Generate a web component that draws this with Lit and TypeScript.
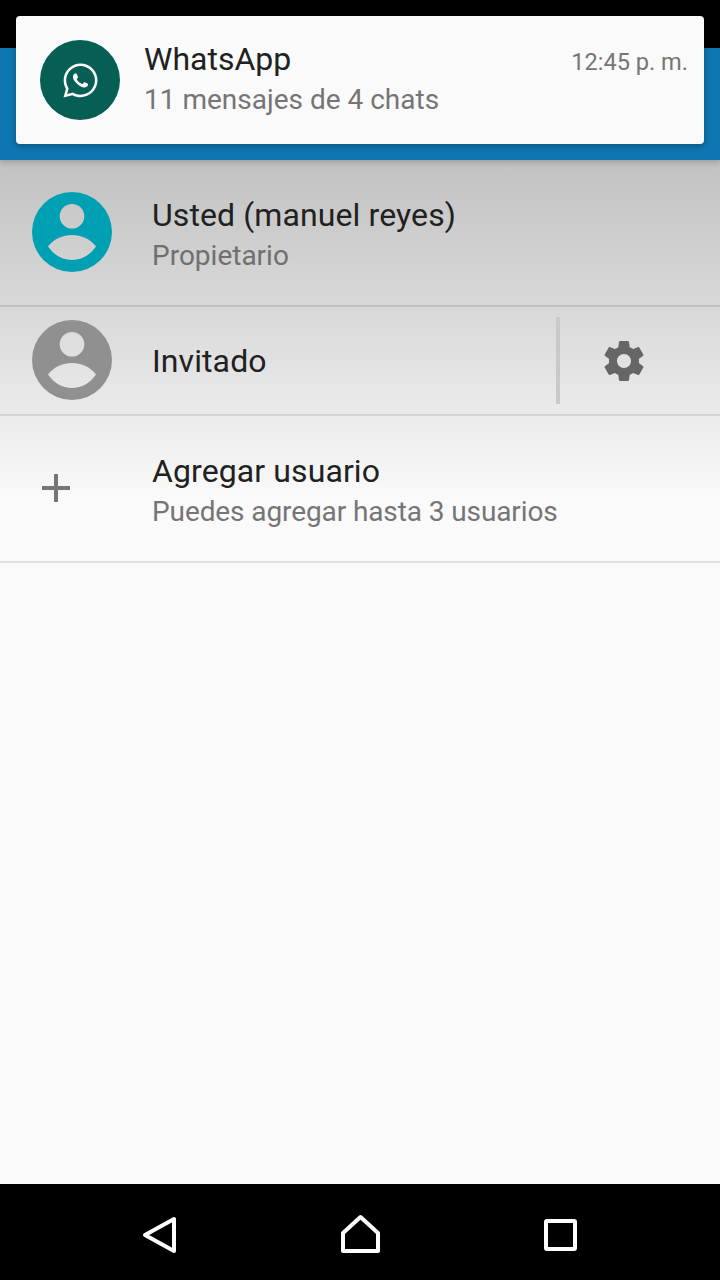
import { LitElement, html, css } from 'lit';
import { customElement, property } from 'lit/decorators.js';

const GEAR =
  'M19.43 12.98c.04-.32.07-.64.07-.98s-.03-.66-.07-.98l2.11-1.65c.19-.15.24-.42.12-.64l-2-3.46c-.12-.22-.39-.3-.61-.22l-2.49 1c-.52-.4-1.08-.73-1.69-.98l-.38-2.65C14.46 2.18 14.25 2 14 2h-4c-.25 0-.46.18-.49.42l-.38 2.65c-.61.25-1.17.59-1.69.98l-2.49-1c-.23-.09-.49 0-.61.22l-2 3.46c-.13.22-.07.49.12.64l2.11 1.65c-.04.32-.07.65-.07.98s.03.66.07.98l-2.11 1.65c-.19.15-.24.42-.12.64l2 3.46c.12.22.39.3.61.22l2.49-1c.52.4 1.08.73 1.69.98l.38 2.65c.03.24.24.42.49.42h4c.25 0 .46-.18.49-.42l.38-2.65c.61-.25 1.17-.59 1.69-.98l2.49 1c.23.09.49 0 .61-.22l2-3.46c.12-.22.07-.49-.12-.64l-2.11-1.65zM12 15.5c-1.93 0-3.5-1.57-3.5-3.5s1.57-3.5 3.5-3.5 3.5 1.57 3.5 3.5-1.57 3.5-3.5 3.5z';

const WA_BUBBLE =
  'M12.04 2C6.58 2 2.13 6.45 2.13 11.91C2.13 13.66 2.59 15.36 3.45 16.86L2.05 22L7.3 20.62C8.75 21.41 10.38 21.83 12.04 21.83C17.5 21.83 21.95 17.38 21.95 11.92C21.95 9.27 20.92 6.78 19.05 4.91C17.18 3.03 14.69 2 12.04 2M12.05 3.5C14.25 3.5 16.4 4.45 17.95 6C19.5 7.6 20.45 9.72 20.45 11.92C20.45 16.55 16.65 20.32 12.04 20.32C10.56 20.32 9.05 19.9 7.8 19.15L7.55 19L4.2 19.9L5.1 16.65L4.9 16.35C4.08 15 3.63 13.47 3.63 11.91C3.64 7.3 7.45 3.5 12.05 3.5Z';

const WA_HANDSET =
  'M8.53 7.33C8.37 7.33 8.1 7.39 7.87 7.64C7.65 7.89 7 8.5 7 9.71C7 10.93 7.89 12.1 8 12.27C8.14 12.44 9.76 14.94 12.25 16C12.84 16.27 13.3 16.42 13.66 16.53C14.25 16.72 14.79 16.69 15.22 16.63C15.7 16.56 16.68 16.03 16.89 15.45C17.1 14.87 17.1 14.38 17.04 14.27C16.97 14.17 16.81 14.11 16.56 14C16.31 13.86 15.09 13.26 14.87 13.18C14.64 13.1 14.5 13.06 14.31 13.3C14.15 13.55 13.67 14.11 13.53 14.27C13.38 14.44 13.24 14.46 13 14.34C12.74 14.21 11.94 13.95 11 13.11C10.26 12.45 9.77 11.64 9.62 11.39C9.5 11.15 9.61 11 9.73 10.89C9.84 10.78 10 10.6 10.1 10.45C10.23 10.31 10.27 10.2 10.35 10.04C10.43 9.87 10.39 9.73 10.33 9.61C10.27 9.5 9.77 8.26 9.56 7.77C9.36 7.29 9.16 7.35 9 7.34C8.86 7.34 8.7 7.33 8.53 7.33Z';

// disc with head and shoulders punched out, so the list gradient shows through
const AVATAR =
  'M40 0A40 40 0 1 0 40 80A40 40 0 1 0 40 0Z' +
  'M40 12A12.3 12.3 0 1 1 40 36.6A12.3 12.3 0 1 1 40 12Z' +
  'M16 54.5C22 47 30 43 40 43C50 43 58 47 64 54.5C58 63 50 68 40 68C30 68 22 63 16 54.5Z';

@customElement('user-avatar')
export class UserAvatar extends LitElement {
  @property() color = '#9e9e9e';

  static styles = css`
    :host {
      display: block;
      width: 80px;
      height: 80px;
    }
    svg {
      display: block;
    }
  `;

  render() {
    return html`
      <svg width="80" height="80" viewBox="0 0 80 80">
        <path fill=${this.color} fill-rule="evenodd" d=${AVATAR} />
      </svg>
    `;
  }
}

@customElement('app-root')
export class AppRoot extends LitElement {
  static styles = css`
    :host {
      display: flex;
      flex-direction: column;
      position: relative;
      width: 720px;
      height: 1280px;
      overflow: hidden;
      background: #fafafa;
      font-family: Roboto, 'Noto Sans', sans-serif;
      color: #212121;
    }
    .status {
      height: 48px;
      background: #000;
    }
    .toolbar {
      height: 112px;
      background: #0e76b1;
      box-shadow: 0 2px 6px rgba(0, 0, 0, 0.22);
      position: relative;
      z-index: 1;
    }
    .notification {
      position: absolute;
      z-index: 2;
      top: 16px;
      left: 16px;
      width: 688px;
      height: 128px;
      box-sizing: border-box;
      padding: 24px 16px 24px 24px;
      display: flex;
      gap: 24px;
      background: #fafafa;
      border-radius: 4px;
      box-shadow: 0 2px 6px rgba(0, 0, 0, 0.28);
    }
    .app-icon {
      width: 80px;
      height: 80px;
      flex: none;
      border-radius: 50%;
      background: #075e54;
      display: flex;
      align-items: center;
      justify-content: center;
    }
    .note-body {
      flex: 1;
      min-width: 0;
    }
    .note-head {
      display: flex;
      justify-content: space-between;
      align-items: baseline;
      margin: -1px 0 1px;
    }
    .note-title {
      font-size: 32px;
      line-height: 40px;
    }
    .note-time {
      font-size: 23.6px;
      color: #757575;
    }
    .note-text {
      font-size: 28px;
      line-height: 40px;
      color: #757575;
    }
    .list {
      flex: 1;
      background: linear-gradient(#c2c2c2 0, #d8d8d8 145px, #eaeaea 250px, #fafafa 340px);
    }
    .row {
      display: flex;
      align-items: center;
      box-sizing: border-box;
      padding-bottom: 1px;
      border-bottom: 2px solid rgba(0, 0, 0, 0.1);
    }
    .row.tall {
      height: 147px;
    }
    .row.short {
      height: 109px;
    }
    .lead {
      flex: none;
      width: 80px;
      margin: 0 40px 0 32px;
    }
    .lines {
      flex: 1;
      padding-top: 7px;
    }
    .row.short .lines {
      padding-top: 2px;
    }
    .name {
      font-size: 32px;
      line-height: 40px;
      letter-spacing: 0.1px;
    }
    .sub {
      margin-top: 1px;
      font-size: 28px;
      line-height: 40px;
      color: #757575;
    }
    .sub.owner {
      color: #6f6f6f;
    }
    .sub.hint {
      letter-spacing: -0.1px;
    }
    .settings {
      flex: none;
      width: 164px;
      height: 87px;
      margin-top: 1px;
      box-sizing: border-box;
      border-left: 4px solid #c9c9c9;
      display: flex;
      align-items: center;
      justify-content: center;
      padding-right: 32px;
    }
    .plus {
      display: block;
      width: 48px;
      height: 48px;
    }
    .nav {
      height: 96px;
      background: #000;
      display: grid;
      grid-template-columns: repeat(3, 200px);
      justify-content: center;
      align-items: center;
      justify-items: center;
    }
    .nav svg {
      display: block;
      fill: none;
      stroke: #fff;
      stroke-width: 4;
      stroke-linejoin: round;
    }
  `;

  render() {
    return html`
      <div class="status"></div>
      <div class="toolbar"></div>

      <div class="notification">
        <div class="app-icon">
          <svg width="41" height="41" viewBox="0 0 24 24" fill="#fafafa">
            <path fill-rule="evenodd" d=${WA_BUBBLE} />
            <path transform="translate(1.4 1.4) scale(0.88)" d=${WA_HANDSET} />
          </svg>
        </div>
        <div class="note-body">
          <div class="note-head">
            <span class="note-title">WhatsApp</span>
            <span class="note-time">12:45 p. m.</span>
          </div>
          <div class="note-text">11 mensajes de 4 chats</div>
        </div>
      </div>

      <div class="list">
        <div class="row tall">
          <user-avatar class="lead" color="#00a0b4"></user-avatar>
          <div class="lines">
            <div class="name">Usted (manuel reyes)</div>
            <div class="sub owner">Propietario</div>
          </div>
        </div>
        <div class="row short">
          <user-avatar class="lead" color="#909090"></user-avatar>
          <div class="lines">
            <div class="name">Invitado</div>
          </div>
          <div class="settings">
            <svg width="48" height="48" viewBox="0 0 24 24" fill="#666666"><path d=${GEAR} /></svg>
          </div>
        </div>
        <div class="row tall">
          <div class="lead">
            <svg class="plus" viewBox="0 0 48 48" fill="#757575">
              <rect x="10" y="22" width="28" height="4" />
              <rect x="22" y="10" width="4" height="28" />
            </svg>
          </div>
          <div class="lines">
            <div class="name">Agregar usuario</div>
            <div class="sub hint">Puedes agregar hasta 3 usuarios</div>
          </div>
        </div>
      </div>

      <div class="nav">
        <svg width="48" height="48" viewBox="0 0 48 48"><path d="M9 27L38 11V43Z" /></svg>
        <svg width="48" height="48" viewBox="0 0 48 48"><path d="M7 25L24.5 9L42 25V43H7Z" /></svg>
        <svg width="48" height="48" viewBox="0 0 48 48"><rect x="10" y="13" width="29" height="28" rx="1" /></svg>
      </div>
    `;
  }
}
